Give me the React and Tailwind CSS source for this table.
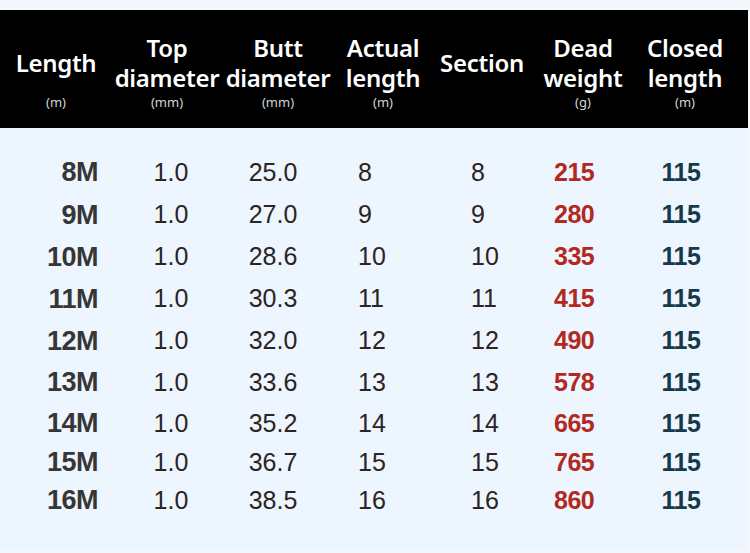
const cols = 'grid grid-cols-[112px_110px_112px_98px_100px_102px_102px]'

const headers = [
  { title: ['Length'], unit: '(m)' },
  { title: ['Top', 'diameter'], unit: '(mm)' },
  { title: ['Butt', 'diameter'], unit: '(mm)' },
  { title: ['Actual', 'length'], unit: '(m)' },
  { title: ['Section'], unit: '' },
  { title: ['Dead', 'weight'], unit: '(g)' },
  { title: ['Closed', 'length'], unit: '(m)' },
]

const rows = [
  { len: '8M', top: '1.0', butt: '25.0', actual: '8', section: '8', weight: '215', h: 'h-[43px]' },
  { len: '9M', top: '1.0', butt: '27.0', actual: '9', section: '9', weight: '280', h: 'h-[42px]' },
  { len: '10M', top: '1.0', butt: '28.6', actual: '10', section: '10', weight: '335', h: 'h-[42px]' },
  { len: '11M', top: '1.0', butt: '30.3', actual: '11', section: '11', weight: '415', h: 'h-[42px]' },
  { len: '12M', top: '1.0', butt: '32.0', actual: '12', section: '12', weight: '490', h: 'h-[42px]' },
  { len: '13M', top: '1.0', butt: '33.6', actual: '13', section: '13', weight: '578', h: 'h-[41px]' },
  { len: '14M', top: '1.0', butt: '35.2', actual: '14', section: '14', weight: '665', h: 'h-[39px]' },
  { len: '15M', top: '1.0', butt: '36.7', actual: '15', section: '15', weight: '765', h: 'h-[38px]' },
  { len: '16M', top: '1.0', butt: '38.5', actual: '16', section: '16', weight: '860', h: 'h-[38px]' },
]

export default function App() {
  return (
    <div className="w-[750px] h-[553px] bg-[#f4f8fd] pt-[10px] overflow-hidden">
      <div className="w-[748px] h-[540px] flex flex-col">
        {/* Header */}
        <div
          className={`${cols} bg-black text-white h-[118px] pt-[23px]`}
          style={{ fontFamily: '"Noto Sans", sans-serif' }}
        >
          {headers.map((h, i) => (
            <div key={i} className="flex flex-col items-center">
              <div className="h-[60px] flex flex-col justify-center items-center">
                {h.title.map(t => (
                  <div key={t} className="text-[24px] leading-[30px] font-semibold tracking-[-0.3px]">{t}</div>
                ))}
              </div>
              <div className="mt-[1px] text-[13px] leading-[16px] text-[#d4d4d4]">{h.unit}</div>
            </div>
          ))}
        </div>

        {/* Body */}
        <div
          className="flex-1 bg-[#edf5fe] pt-[23px]"
          style={{ fontFamily: '"Liberation Sans", Arial, sans-serif' }}
        >
          {rows.map(r => (
            <div key={r.len} className={`${cols} ${r.h} items-center text-[25px] text-[#2b2421]`}>
              <div className="text-right pr-[14px] font-bold text-[27px] text-[#363636] tracking-[-0.5px]">{r.len}</div>
              <div className="text-center pl-[8px]">{r.top}</div>
              <div className="text-center pr-[10px]">{r.butt}</div>
              <div className="pl-[24px]">{r.actual}</div>
              <div className="pl-[39px]">{r.section}</div>
              <div className="pl-[22px] font-bold text-[#b3281f] tracking-[-0.5px]">{r.weight}</div>
              <div className="text-center pr-[8px] font-bold text-[#173a4b] tracking-[-0.5px]">115</div>
            </div>
          ))}
        </div>
      </div>
    </div>
  )
}
